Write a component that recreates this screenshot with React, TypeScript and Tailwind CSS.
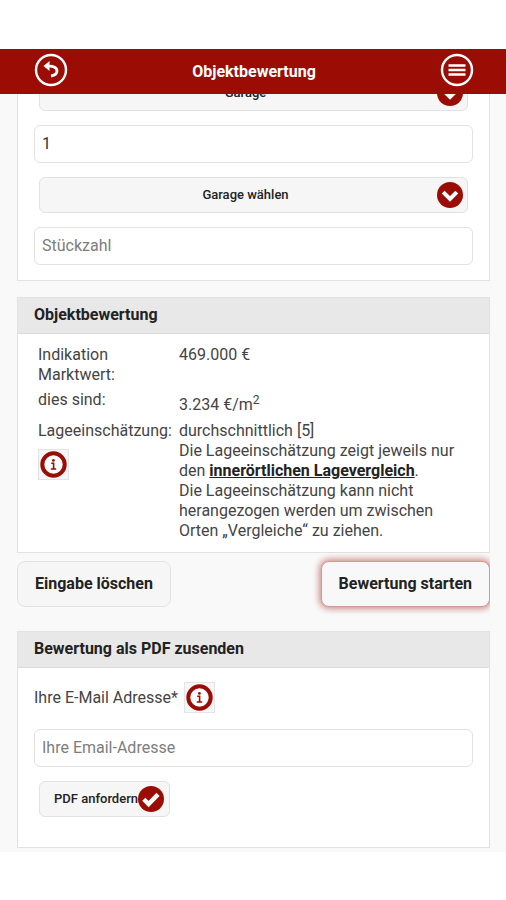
/**
 * Objektbewertung - Formular mit Garagenauswahl, Ergebnis der Bewertung
 * und PDF-Versand per E-Mail.
 */

import type { ReactNode } from 'react';
import { clsx } from 'clsx';

const GARAGES = ['Garage', 'Carport', 'Tiefgarage', 'Stellplatz'];

function BackIcon() {
  return (
    <svg width="34" height="34" viewBox="0 0 34 34" fill="none" stroke="#fff" aria-hidden="true">
      <circle cx="17" cy="17" r="15" strokeWidth="2.4" />
      <path d="M14 13.2c5.500-.4 9 1.400 9 4.800 0 2.800-2 4.400-6 5" strokeWidth="2.8" />
      <path d="M9.5 13 15.5 8v10z" fill="#fff" stroke="none" />
    </svg>
  );
}

function MenuIcon() {
  return (
    <svg width="34" height="34" viewBox="0 0 34 34" fill="none" stroke="#fff" aria-hidden="true">
      <circle cx="17" cy="17" r="15" strokeWidth="2.4" />
      <path d="M8.5 12.5h17M8.5 17h17M8.5 21.5h17" strokeWidth="2.6" />
    </svg>
  );
}

function ChevronIcon() {
  return (
    <svg width="26" height="26" viewBox="0 0 26 26" aria-hidden="true">
      <circle cx="13" cy="13" r="13" fill="#9b0c04" />
      <path d="m6.2 10.2 6.8 6.8 6.8-6.8" fill="none" stroke="#fff" strokeWidth="4" />
    </svg>
  );
}

function CheckIcon() {
  return (
    <svg width="26" height="26" viewBox="0 0 26 26" aria-hidden="true">
      <circle cx="13" cy="13" r="13" fill="#9b0c04" />
      <path d="m5.8 13.2 4.8 4.8 9.4-9.6" fill="none" stroke="#fff" strokeWidth="4.4" />
    </svg>
  );
}

function InfoButton({ label }: { label: string }) {
  return (
    <button type="button" aria-label={label}
      className="flex size-[31px] shrink-0 items-center justify-center border border-[#e4e4e4] bg-[#f6f6f6]">
      <svg width="27" height="27" viewBox="0 0 27 27" aria-hidden="true">
        <circle cx="13.5" cy="13.5" r="11.2" fill="#fff" stroke="#9b0c04" strokeWidth="4" />
        <circle cx="13.4" cy="9.4" r="1.4" fill="#9b0c04" />
        <path d="M11.2 12.2h2.4v5.4M10.8 18h5.4" fill="none" stroke="#9b0c04" strokeWidth="1.6" />
      </svg>
    </button>
  );
}

function GarageSelect({ label, placeholder }: { label: string; placeholder?: string }) {
  return (
    <div className="relative mx-[5px]">
      <select aria-label={label} defaultValue={placeholder ? '' : 'Garage'}
        className="block h-9 w-full appearance-none rounded-md border border-[#e2e2e2] bg-[#f6f6f6] pr-6 pl-2 text-center text-[13px] font-medium text-[#222] [text-align-last:center]">
        {placeholder && <option value="">{placeholder}</option>}
        {GARAGES.map((g) => <option key={g} value={g}>{g}</option>)}
      </select>
      <span className="pointer-events-none absolute inset-y-0 right-[5px] flex items-center"><ChevronIcon /></span>
    </div>
  );
}

const fieldClass =
  'block h-[38px] w-full rounded-md border border-[#e2e2e2] bg-white px-[7px] pb-[2px] text-base text-[#333] placeholder:text-[#7d7d7d]';

function Panel({ title, className, children }: { title?: string; className?: string; children: ReactNode }) {
  return (
    <section className="border border-[#e2e2e2] bg-white">
      {title && (
        <h2 className="h-9 border-b border-[#dcdcdc] bg-[#e8e8e8] px-4 text-base leading-[34px] font-bold text-[#222]">{title}</h2>
      )}
      <div className={clsx('px-4', className)}>{children}</div>
    </section>
  );
}

export default function App() {
  return (
    <div className="bg-white py-[49px] font-['Roboto',sans-serif] text-[#444]">
      <header className="relative z-10 flex h-[45px] items-center justify-between bg-[#9b0c04] pr-8 pl-[34px]">
        <button type="button" aria-label="Zurück" className="-mt-1"><BackIcon /></button>
        <h1 className="text-base font-bold text-white">Objektbewertung</h1>
        <button type="button" aria-label="Menü" className="-mt-1"><MenuIcon /></button>
      </header>

      <main className="overflow-hidden bg-[#f9f9f9] px-4 pb-1 pl-[17px]">
        {/* scrolled under the header */}
        <div className="-mt-5">
          <Panel className="pb-[15px]">
            <div className="space-y-[14px]">
              <GarageSelect label="Garage 1" />
              <input aria-label="Stückzahl 1" defaultValue="1" className={fieldClass} />
              <GarageSelect label="Garage 2" placeholder="Garage wählen" />
              <input aria-label="Stückzahl 2" placeholder="Stückzahl" className={fieldClass} />
            </div>
          </Panel>
        </div>

        <div className="mt-4">
          <Panel title="Objektbewertung" className="pt-2 pb-2">
            <table className="w-full text-base leading-5">
              <tbody>
                <tr className="align-top">
                  <th scope="row" className="w-[145px] py-[3px] pr-1 pl-1 text-left font-normal">Indikation Marktwert:</th>
                  <td className="py-[3px]">469.000 €</td>
                </tr>
                <tr className="align-top">
                  <th scope="row" className="py-[2px] pl-1 text-left font-normal">dies sind:</th>
                  <td className="pt-[7px] pb-[3px]">3.234 €/m<sup>2</sup></td>
                </tr>
                <tr className="align-top">
                  <th scope="row" className="py-[3px] pl-1 text-left font-normal">
                    Lageeinschätzung:
                    <div className="mt-2"><InfoButton label="Info zur Lageeinschätzung" /></div>
                  </th>
                  <td className="py-[3px]">
                    durchschnittlich [5]<br />
                    Die Lageeinschätzung zeigt jeweils nur den{' '}
                    <a href="#lagevergleich" className="font-bold text-[#222] underline">innerörtlichen Lagevergleich</a>.<br />
                    Die Lageeinschätzung kann nicht herangezogen werden um zwischen Orten „Vergleiche“ zu ziehen.
                  </td>
                </tr>
              </tbody>
            </table>
          </Panel>
        </div>

        <div className="flex justify-between overflow-x-clip py-2">
          <button type="button" className="h-[46px] rounded-lg border border-[#e2e2e2] bg-[#f6f6f6] px-[17px] text-base font-bold text-[#222]">
            Eingabe löschen
          </button>
          <button type="button" className="h-[46px] rounded-lg border border-[#d29a96] bg-[#f8f8f8] px-[17px] text-base font-bold text-[#222] shadow-[0_0_6px_2px_rgba(155,12,4,0.45)]">
            Bewertung starten
          </button>
        </div>

        <div className="mt-4">
          <Panel title="Bewertung als PDF zusenden" className="pt-[14px] pb-[30px]">
            <div className="flex items-center gap-[6px]">
              <label htmlFor="email" className="text-base leading-5">Ihre E-Mail Adresse*</label>
              <InfoButton label="Info zur E-Mail Adresse" />
            </div>
            <input id="email" type="email" placeholder="Ihre Email-Adresse" className={clsx(fieldClass, 'mt-4')} />
            <button type="button" className="mt-[14px] ml-[5px] flex h-9 items-center rounded-md border border-[#e2e2e2] bg-[#f6f6f6] pr-[5px] pl-[14px] text-[13px] font-medium text-[#222]">
              PDF anfordern
              <CheckIcon />
            </button>
          </Panel>
        </div>
      </main>
    </div>
  );
}
